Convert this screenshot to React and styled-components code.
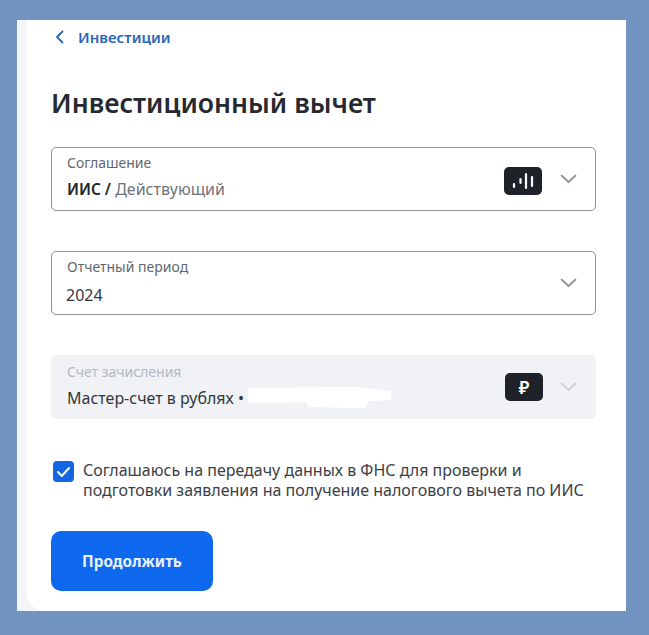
import styled, { createGlobalStyle } from "styled-components";

const GlobalStyle = createGlobalStyle`
  html, body {
    margin: 0;
    padding: 0;
    background: #7093bf;
    font-family: "Noto Sans", "Open Sans", sans-serif;
  }
`;

const Page = styled.div`
  width: 649px;
  height: 635px;
  padding: 20px 23px 24px 17px;
  box-sizing: border-box;
`;

const Frame = styled.div`
  height: 100%;
  background: #f3f5f9;
  padding-left: 10px;
`;

const Panel = styled.main`
  height: 100%;
  box-sizing: border-box;
  background: #fff;
  border-bottom-left-radius: 18px;
  padding: 0 30px 20px 24px;
  display: flex;
  flex-direction: column;
`;

const BackLink = styled.a`
  display: flex;
  align-items: center;
  gap: 13px;
  height: 34px;
  padding-left: 4px;
  color: #2a66b8;
  font-size: 15px;
  font-weight: 600;
`;

const Title = styled.h1`
  margin: 31px 0 26px;
  font-size: 26.6px;
  line-height: 36px;
  font-weight: 600;
  color: #262a30;
`;

const Fields = styled.div`
  display: flex;
  flex-direction: column;
  gap: 40px;
`;

const Field = styled.div`
  height: 64px;
  box-sizing: border-box;
  display: flex;
  align-items: center;
  border-radius: 5px;
  border: 1px solid ${(props) => (props.$disabled ? "#f0f2f5" : "#8f9296")};
  background: ${(props) => (props.$disabled ? "#f0f2f5" : "#fff")};
  padding: 0 18px 0 ${(props) => props.$indent || 15}px;
`;

const FieldText = styled.div`
  flex: 1;
  min-width: 0;
  padding-bottom: 3px;
`;

const Label = styled.div`
  font-size: 14px;
  line-height: 18px;
  margin-left: ${(props) => props.$shift || 0}px;
  color: ${(props) => (props.$disabled ? "#b3b8c0" : "#62676e")};
`;

const Value = styled.div`
  margin-top: ${(props) => props.$gap || 6}px;
  font-size: 16px;
  line-height: 22px;
  white-space: nowrap;
  color: #33373d;
`;

const Strong = styled.b`
  font-size: 15.4px;
  font-weight: 600;
  color: #23262b;
`;

const Muted = styled.span`
  color: #6f7379;
`;

const Redacted = styled.span`
  display: inline-block;
  width: 143px;
  height: 22px;
  vertical-align: top;
  background: #fff;
  clip-path: polygon(0 8%, 75% 0, 100% 22%, 100% 62%, 84% 66%, 82% 100%, 42% 92%, 40% 72%, 0 74%);
`;

const Badge = styled.div`
  width: 38px;
  height: 28px;
  margin-top: ${(props) => props.$drop || 0}px;
  margin-right: ${(props) => props.$gap}px;
  border-radius: 5px;
  background: #1f2229;
  color: #fff;
  display: flex;
  align-items: center;
  justify-content: center;
  font-size: 18px;
  font-weight: 600;
`;

const Chevron = styled.svg`
  width: 17px;
  height: 10px;
  fill: none;
  stroke: ${(props) => (props.$disabled ? "#cdd0d6" : "#8f949c")};
  stroke-width: 1.8;
  stroke-linecap: round;
  stroke-linejoin: round;
`;

const Consent = styled.label`
  display: flex;
  gap: 9px;
  margin: 41px 0 31px 2px;
  font-size: 16px;
  line-height: 20px;
  white-space: nowrap;
  color: #3c4046;
`;

const CheckBox = styled.span`
  flex: none;
  width: 21px;
  height: 21px;
  margin-top: 1px;
  border-radius: 4px;
  background: #1266e4;
  display: flex;
  align-items: center;
  justify-content: center;
`;

const SubmitButton = styled.button`
  width: 162px;
  height: 60px;
  border: none;
  border-radius: 10px;
  background: #0f69ef;
  color: #e8f2ff;
  font-family: inherit;
  font-size: 15.3px;
  font-weight: 700;
`;

const ChevronDown = ({ disabled }) => (
  <Chevron viewBox="0 0 17 10" $disabled={disabled}>
    <path d="M1.5 1.5l7 6.5 7-6.5" />
  </Chevron>
);

const App = () => {
  return (
    <Page>
      <GlobalStyle />
      <Frame>
        <Panel>
          <BackLink>
            <svg width="10" height="14" viewBox="0 0 10 14" fill="none" stroke="#2a66b8" strokeWidth="1.8" strokeLinecap="round" strokeLinejoin="round">
              <path d="M7.5 1.5L2 7l5.5 5.5" />
            </svg>
            Инвестиции
          </BackLink>
          <Title>Инвестиционный вычет</Title>
          <Fields>
            <Field>
              <FieldText>
                <Label>Соглашение</Label>
                <Value>
                  <Strong>ИИС /</Strong> <Muted>Действующий</Muted>
                </Value>
              </FieldText>
              <Badge $gap={18} $drop={4}>
                <svg width="24" height="18" viewBox="0 0 24 18" stroke="#fff" strokeLinecap="round" strokeWidth="2.2">
                  <path d="M3 12v3M9.500 7v4M15 2v14M21 5v9" />
                </svg>
              </Badge>
              <ChevronDown />
            </Field>
            <Field $indent={14}>
              <FieldText>
                <Label $shift={1}>Отчетный период</Label>
                <Value $gap={8}>2024</Value>
              </FieldText>
              <ChevronDown />
            </Field>
            <Field $disabled>
              <FieldText>
                <Label $disabled>Счет зачисления</Label>
                <Value>
                  Мастер-счет в рублях • <Redacted />
                </Value>
              </FieldText>
              <Badge $gap={17}>₽</Badge>
              <ChevronDown disabled />
            </Field>
          </Fields>
          <Consent>
            <CheckBox>
              <svg width="15" height="12" viewBox="0 0 15 12" fill="none" stroke="#fff" strokeWidth="2" strokeLinecap="round" strokeLinejoin="round">
                <path d="M2 6l3.800 4L13 2" />
              </svg>
            </CheckBox>
            <span>
              Соглашаюсь на передачу данных в ФНС для проверки и
              <br />
              подготовки заявления на получение налогового вычета по ИИС
            </span>
          </Consent>
          <SubmitButton>Продолжить</SubmitButton>
        </Panel>
      </Frame>
    </Page>
  );
};

export default App;
